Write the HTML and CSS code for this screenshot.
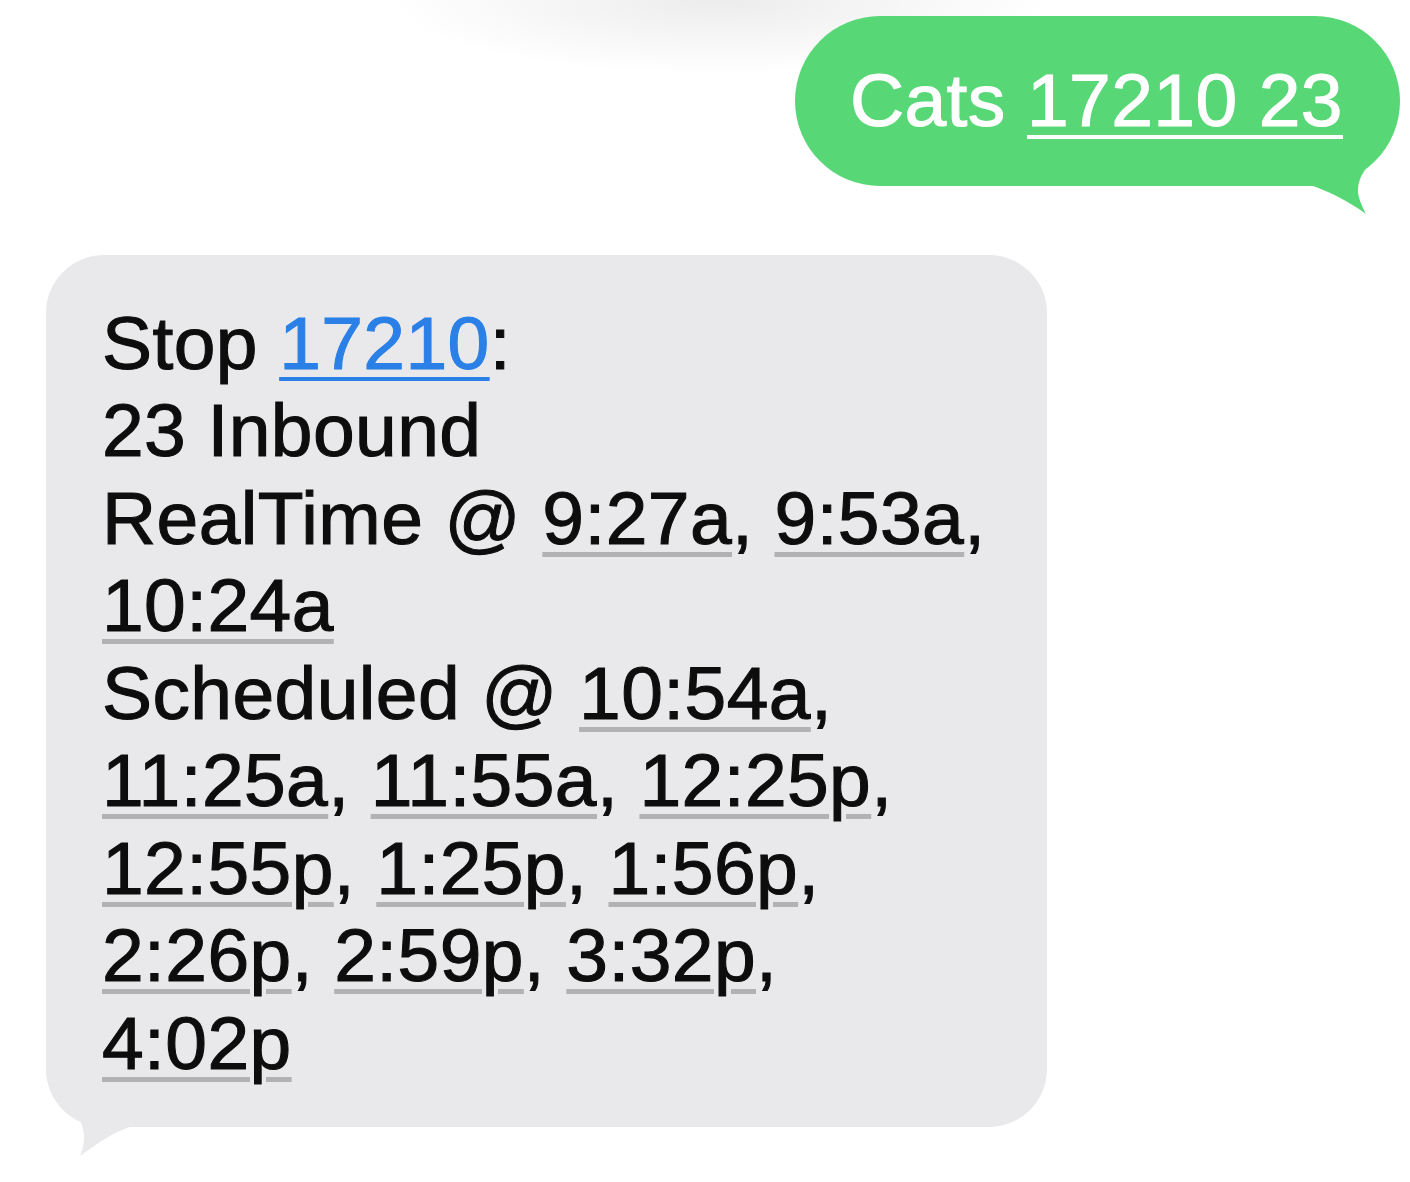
FILE: index.html
```html
<!DOCTYPE html>
<html lang="en">
<head>
<meta charset="utf-8">
<title>Messages</title>
<link rel="stylesheet" href="styles.css">
</head>
<body>
<div class="thread">
  <div class="row row-out">
    <div class="bubble bubble-out">Cats <span class="u-white">17210 23</span><svg class="tail tail-out" width="100" height="80" viewBox="0 0 100 80"><path d="M5 46 L13 46 C30 52 50 62 66 74 C62 66 57 56 58 48 C59 40 62 34 65 30 L40 20 L5 40 Z"/></svg></div>
  </div>
  <div class="row row-in">
    <div class="bubble bubble-in">Stop <span class="link">17210</span>:<br>23 Inbound<br>RealTime @ <span class="t">9:27a</span>, <span class="t">9:53a</span>,<br><span class="t">10:24a</span><br>Scheduled @ <span class="t">10:54a</span>,<br><span class="t">11:25a</span>, <span class="t">11:55a</span>, <span class="t">12:25p</span>,<br><span class="t">12:55p</span>, <span class="t">1:25p</span>, <span class="t">1:56p</span>,<br><span class="t">2:26p</span>, <span class="t">2:59p</span>, <span class="t">3:32p</span>,<br><span class="t">4:02p</span><svg class="tail tail-in" width="100" height="80" viewBox="0 0 100 80"><path d="M95 48 L90 48 C75 52 55 66 40 77 C44 68 45 58 43 50 C42 46 41 44 40 40 L60 20 L95 40 Z"/></svg></div>
  </div>
</div>
</body>
</html>
```

FILE: styles.css
```css
html, body {
  margin: 0;
  padding: 0;
  background: #ffffff;
}

.thread {
  width: 1410px;
  height: 1182px;
  box-sizing: border-box;
  padding-top: 16px;
  display: flex;
  flex-direction: column;
  gap: 69px;
  font-family: "Liberation Sans", Arial, sans-serif;
  font-size: 75px;
  line-height: 87.5px;
  letter-spacing: 0.4px;
  -webkit-text-stroke-width: 1.1px;
  background:
    radial-gradient(ellipse 330px 75px at 720px 0px, rgba(0, 0, 0, 0.075), rgba(0, 0, 0, 0) 100%),
    #ffffff;
  overflow: hidden;
}

.row {
  display: flex;
}

.row-out {
  justify-content: flex-end;
  padding-right: 10px;
}

.row-in {
  justify-content: flex-start;
  padding-left: 46px;
}

.bubble {
  position: relative;
  box-sizing: border-box;
}

.bubble-out {
  background: #57d775;
  color: #ffffff;
  border-radius: 85px;
  padding: 41px 57px 41px 55px;
  white-space: nowrap;
}

.bubble-in {
  background: #e9e9eb;
  color: #0d0d0d;
  width: 1001px;
  border-radius: 58px;
  padding: 45px 40px 40px 56px;
  white-space: nowrap;
}

.tail {
  position: absolute;
  display: block;
  overflow: visible;
}

.tail-out {
  right: 0;
  bottom: -34px;
  fill: #57d775;
}

.tail-in {
  left: -6px;
  bottom: -32px;
  fill: #e9e9eb;
}

.u-white {
  text-decoration: underline;
  text-decoration-color: #ffffff;
  text-decoration-thickness: 4px;
  text-underline-offset: 9px;
}

.link {
  color: #2a80e6;
  text-decoration: underline;
  text-decoration-color: #2a80e6;
  text-decoration-thickness: 4px;
  text-underline-offset: 8px;
}

.t {
  text-decoration: underline;
  text-decoration-color: #b2b2b4;
  text-decoration-thickness: 5px;
  text-underline-offset: 8px;
}
```
